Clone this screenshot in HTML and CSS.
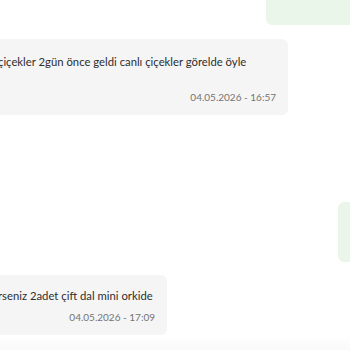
FILE: index.html
```html
<!DOCTYPE html>
<html lang="tr">
<head>
<meta charset="utf-8">
<link rel="stylesheet" href="styles.css">
</head>
<body>
<div class="chat">
  <div class="bubble out out-top"></div>
  <div class="bubble in in-first">
    <div class="text">çiçekler 2gün önce geldi canlı çiçekler görelde öyle</div>
    <div class="time">04.05.2026 - 16:57</div>
  </div>
  <div class="bubble out out-mid"></div>
  <div class="bubble in in-second">
    <div class="text">rseniz 2adet çift dal mini orkide</div>
    <div class="time">04.05.2026 - 17:09</div>
  </div>
  <div class="footer"></div>
</div>
</body>
</html>
```
FILE: styles.css
```css
html, body {
  margin: 0;
  padding: 0;
  background: #ffffff;
  overflow: hidden;
  width: 350px;
  height: 350px;
}
.chat {
  display: flex;
  flex-direction: column;
  width: 350px;
  font-family: "Lato", "Noto Sans", sans-serif;
  color: #2e2e2e;
}
.bubble {
  box-sizing: border-box;
}
.out {
  align-self: flex-end;
  background: #eaf6ea;
  border-radius: 6px;
  margin-right: -20px;
}
.out-top {
  width: 104px;
  margin-top: -10px;
  height: 35px;
}
.out-mid {
  width: 32px;
  height: 60px;
  margin-top: 87px;
}
.in {
  align-self: flex-start;
  background: #f5f5f5;
  border-radius: 6px;
  display: flex;
  flex-direction: column;
}
.in-first {
  margin-top: 14px;
  margin-left: -14px;
  width: 302px;
  height: 76px;
  padding: 16px 12px 0 12px;
}
.in-second {
  margin-top: 13px;
  margin-left: -14px;
  width: 181px;
  height: 60px;
  padding: 14px 12px 0 12px;
}
.text {
  font-size: 11.3px;
  line-height: 14px;
  white-space: nowrap;
}
.in-first .time {
  margin-top: 22px;
}
.in-second .time {
  margin-top: 8px;
}
.time {
  align-self: flex-end;
  font-size: 10px;
  line-height: 12px;
  color: #747474;
}
.footer {
  margin-top: 4px;
  height: 20px;
  background: linear-gradient(#fdfdfd, #f8f8f8);
}
```
